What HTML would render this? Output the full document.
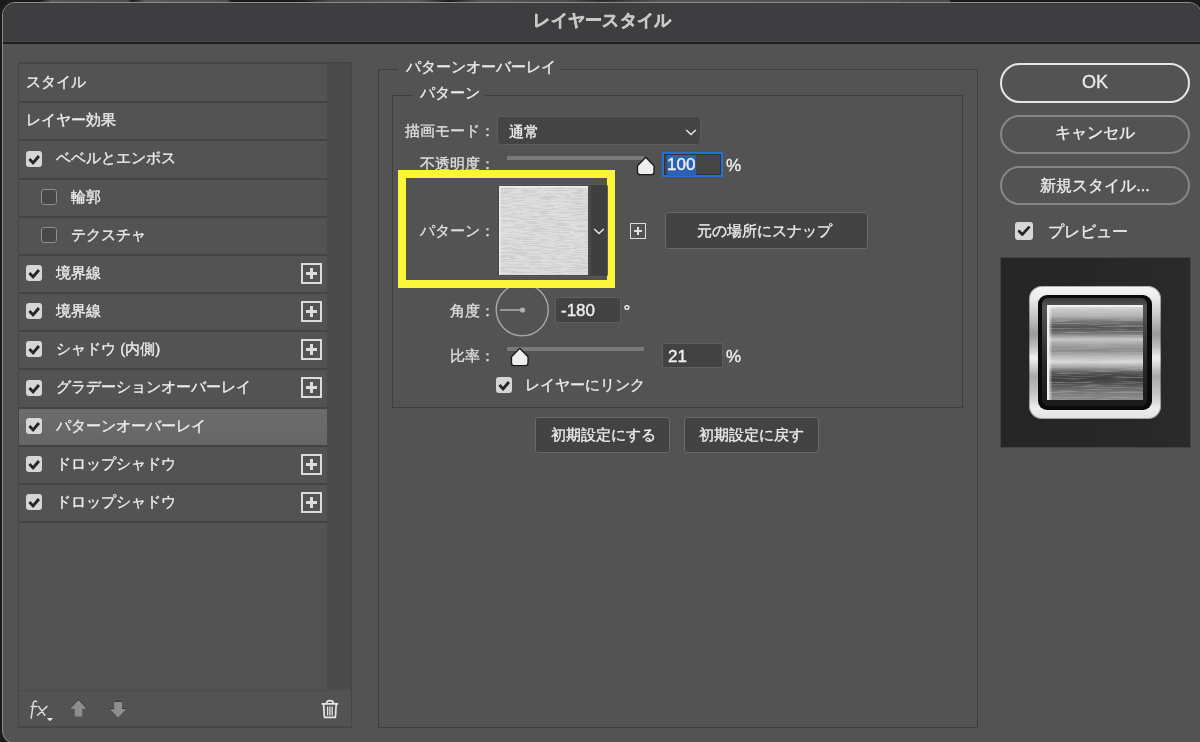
<!DOCTYPE html>
<html><head><meta charset="utf-8">
<style>
*{box-sizing:border-box;margin:0;padding:0}
html,body{width:1200px;height:742px;overflow:hidden;background:#1b1b1b;font-family:"Liberation Sans",sans-serif;}
.abs{position:absolute}
#dlg{position:absolute;left:1.5px;top:2px;width:1200.5px;height:742px;border:1px solid #8c8c8c;border-radius:13px 13px 3px 13px;background:#535353;overflow:hidden}
#title{position:absolute;left:0;top:0;width:100%;height:41px;background:#3e3e40;border-bottom:2px solid #1e1e1e;box-shadow:inset 0 -1px 0 #474749}
#title span{position:absolute;left:0;width:1200px;text-align:center;top:5.7px;font-size:17px;font-weight:bold;color:#c8c8c8;letter-spacing:0.3px;-webkit-text-stroke:0.5px #c8c8c8}
.t{position:absolute;color:#ececec;font-size:15px;white-space:nowrap;line-height:18px;-webkit-text-stroke:0.35px currentColor}
#lp{position:absolute;left:17px;top:62px;width:336px;height:667px;border:1px solid #444;}
.sel{background:linear-gradient(#6c6c6c,#666);} .sep{background:#434343} .lbl{color:#dedede}
.num{font-size:17px;line-height:20px;color:#f0f0f0}
.swatch{background:repeating-linear-gradient(175deg,#dcdcdc 0px,#d2d2d2 1px,#e2e2e2 2px,#d6d6d6 3px)}
.metal{background:linear-gradient(180deg,#f6f6f6 0%,#ececec 9%,#c8c8c8 22%,#9a9a9a 36%,#c0c0c0 46%,#f0f0f0 54%,#a8a8a8 68%,#c8c8c8 82%,#eeeeee 92%,#e2e2e2 100%)}
.ptn{background:linear-gradient(180deg,#dcdcdc 0%,#c4c4c4 8%,#9a9a9a 16%,#505050 23%,#6a6a6a 29%,#cfcfcf 35%,#8e8e8e 43%,#a8a8a8 50%,#e0e0e0 58%,#bdbdbd 65%,#5a5a5a 72%,#363636 80%,#4e4e4e 88%,#8a8a8a 100%)}
.row{position:absolute;left:0;width:310px;height:38px;border-top:2px solid #454545}
.cb{position:absolute;width:16px;height:16px;border-radius:3px;background:#d6d6d6}
.cbo{position:absolute;width:16px;height:16px;border-radius:3px;border:1.5px solid #8e8e8e;background:#474747}
.plus{position:absolute;width:21px;height:21px;border:2px solid #dcdcdc}
.plus:before{content:"";position:absolute;left:3px;top:7px;width:11px;height:3px;background:#dcdcdc}
.plus:after{content:"";position:absolute;left:7px;top:3px;width:3px;height:11px;background:#dcdcdc}
.grp{position:absolute;border:1px solid #3f3f3f}
.btn{position:absolute;background:#434343;border:1px solid #6a6a6a;border-radius:3px;color:#e8e8e8;font-size:14px;text-align:center}
.pill{position:absolute;border:2px solid #868686;border-radius:20px;color:#ececec;font-size:16px;text-align:center}
.inp{position:absolute;background:#444;border:1px solid #5e5e5e;color:#eee;font-size:16px}
</style></head><body style="will-change:transform">
<div class="abs" style="left:40px;top:0;width:220px;height:1.5px;background:linear-gradient(90deg,#1b1b1b,#555 5%,#4a4a4a 40%,#1b1b1b 42%,#5a5a5a 48%,#505050 85%,#1b1b1b 87%)"></div>
<div class="abs" style="left:300px;top:0;width:600px;height:1.5px;background:linear-gradient(90deg,#1b1b1b,#4a4a4a 5%,#595959 20%,#1b1b1b 25%,#555 30%,#4a4a4a 45%,#2a2a2a 50%,#555 60%,#505050 100%)"></div>
<div class="abs" style="left:900px;top:0;width:50px;height:1.5px;background:#4a4a4a"></div>
<div id="dlg">
  <div id="title"><span>レイヤースタイル</span></div>
</div>

<!-- left panel -->
<div class="abs" style="left:18px;top:62px;width:334px;height:666px;background:#535353;border-left:1px solid #464646;border-right:1px solid #464646;border-bottom:2px solid #474747"></div>
<div class="abs" style="left:19px;top:62px;width:308px;height:2px;background:#454545"></div>
<div class="abs" style="left:327px;top:62px;width:24px;height:627px;background:#4a4a4a;border-top:1px solid #454545"></div>
<div class="abs" style="left:19px;top:690px;width:332px;height:1px;background:#4b4b4b"></div>
<div class="t" style="left:25.5px;top:72.5px">スタイル</div>
<div class="t" style="left:25.5px;top:111.0px">レイヤー効果</div>
<div class="cb" style="left:26px;top:150.5px"><svg width="16" height="16" viewBox="0 0 16 16"><path d="M3.4 8.1 L7.1 11.9 L12.9 5" fill="none" stroke="#262626" stroke-width="2.9" stroke-linejoin="miter"/></svg></div>
<div class="t" style="left:56px;top:149.0px">ベベルとエンボス</div>
<div class="cbo" style="left:41px;top:189.0px"></div>
<div class="t" style="left:71px;top:187.5px">輪郭</div>
<div class="cbo" style="left:41px;top:227.0px"></div>
<div class="t" style="left:71px;top:225.5px">テクスチャ</div>
<div class="cb" style="left:26px;top:265.0px"><svg width="16" height="16" viewBox="0 0 16 16"><path d="M3.4 8.1 L7.1 11.9 L12.9 5" fill="none" stroke="#262626" stroke-width="2.9" stroke-linejoin="miter"/></svg></div>
<div class="t" style="left:56px;top:263.5px">境界線</div>
<div class="plus" style="left:301px;top:262.5px"></div>
<div class="cb" style="left:26px;top:303.0px"><svg width="16" height="16" viewBox="0 0 16 16"><path d="M3.4 8.1 L7.1 11.9 L12.9 5" fill="none" stroke="#262626" stroke-width="2.9" stroke-linejoin="miter"/></svg></div>
<div class="t" style="left:56px;top:301.5px">境界線</div>
<div class="plus" style="left:301px;top:300.5px"></div>
<div class="cb" style="left:26px;top:341.0px"><svg width="16" height="16" viewBox="0 0 16 16"><path d="M3.4 8.1 L7.1 11.9 L12.9 5" fill="none" stroke="#262626" stroke-width="2.9" stroke-linejoin="miter"/></svg></div>
<div class="t" style="left:56px;top:339.5px">シャドウ (内側)</div>
<div class="plus" style="left:301px;top:338.5px"></div>
<div class="cb" style="left:26px;top:379.5px"><svg width="16" height="16" viewBox="0 0 16 16"><path d="M3.4 8.1 L7.1 11.9 L12.9 5" fill="none" stroke="#262626" stroke-width="2.9" stroke-linejoin="miter"/></svg></div>
<div class="t" style="left:56px;top:378.0px">グラデーションオーバーレイ</div>
<div class="plus" style="left:301px;top:377.0px"></div>
<div class="abs sel" style="left:19px;top:409px;width:308px;height:36px"></div>
<div class="cb" style="left:26px;top:418.0px"><svg width="16" height="16" viewBox="0 0 16 16"><path d="M3.4 8.1 L7.1 11.9 L12.9 5" fill="none" stroke="#262626" stroke-width="2.9" stroke-linejoin="miter"/></svg></div>
<div class="t" style="left:56px;top:416.5px">パターンオーバーレイ</div>
<div class="cb" style="left:26px;top:456.0px"><svg width="16" height="16" viewBox="0 0 16 16"><path d="M3.4 8.1 L7.1 11.9 L12.9 5" fill="none" stroke="#262626" stroke-width="2.9" stroke-linejoin="miter"/></svg></div>
<div class="t" style="left:56px;top:454.5px">ドロップシャドウ</div>
<div class="plus" style="left:301px;top:453.5px"></div>
<div class="cb" style="left:26px;top:494.0px"><svg width="16" height="16" viewBox="0 0 16 16"><path d="M3.4 8.1 L7.1 11.9 L12.9 5" fill="none" stroke="#262626" stroke-width="2.9" stroke-linejoin="miter"/></svg></div>
<div class="t" style="left:56px;top:492.5px">ドロップシャドウ</div>
<div class="plus" style="left:301px;top:491.5px"></div>
<div class="abs sep" style="left:19px;top:101px;width:308px;height:2px"></div>
<div class="abs sep" style="left:19px;top:139px;width:308px;height:2px"></div>
<div class="abs sep" style="left:19px;top:178px;width:308px;height:2px"></div>
<div class="abs sep" style="left:19px;top:216px;width:308px;height:2px"></div>
<div class="abs sep" style="left:19px;top:254px;width:308px;height:2px"></div>
<div class="abs sep" style="left:19px;top:292px;width:308px;height:2px"></div>
<div class="abs sep" style="left:19px;top:330px;width:308px;height:2px"></div>
<div class="abs sep" style="left:19px;top:368px;width:308px;height:2px"></div>
<div class="abs sep" style="left:19px;top:407px;width:308px;height:2px"></div>
<div class="abs sep" style="left:19px;top:445px;width:308px;height:2px"></div>
<div class="abs sep" style="left:19px;top:483px;width:308px;height:2px"></div>
<div class="abs sep" style="left:19px;top:521px;width:308px;height:2px"></div>
<!-- toolbar -->
<svg class="abs" style="left:28px;top:698px" width="30" height="26" viewBox="0 0 30 26"><path d="M8.6 3.6 Q6.4 2.2 5.4 4.6 L3.2 20.2 M3.2 8.4 L8.8 8.4 M10.6 8.4 L16.8 17.2 M19 8.4 L9.6 17.2" fill="none" stroke="#dcdcdc" stroke-width="1.5" stroke-linecap="round"/><path d="M18.8 20 L25 20 L21.9 23.2Z" fill="#e6e6e6"/></svg>
<svg class="abs" style="left:69px;top:699px" width="19" height="19" viewBox="0 0 19 19"><path d="M9.4 0.6 L18.2 9.8 L13.2 9.8 L13.2 17.4 L5.8 17.4 L5.8 9.8 L0.8 9.8Z" fill="#8e8e8e"/><path d="M0.8 9.8 L9.4 0.6 L18.2 9.8" fill="none" stroke="#333" stroke-width="0.9"/></svg>
<svg class="abs" style="left:109px;top:699.5px" width="19" height="19" viewBox="0 0 19 19"><path d="M5.2 1.6 L13 1.6 L13 8.6 L17.6 8.6 L9.1 17.6 L0.6 8.6 L5.2 8.6Z" fill="#8e8e8e"/><path d="M5.2 1.3 L13 1.3 M0.6 8.6 L5.2 8.6 M13 8.6 L17.6 8.6" stroke="#333" stroke-width="1"/></svg>
<svg class="abs" style="left:320px;top:699px" width="20" height="21" viewBox="0 0 20 21"><path d="M1.6 4.8 L18.2 4.8 M6.4 4.4 Q6.4 1.6 9.9 1.6 Q13.4 1.6 13.4 4.4 M3.6 5.2 L4.4 18.4 L15.4 18.4 L16.2 5.2" fill="none" stroke="#e6e6e6" stroke-width="1.7" stroke-linejoin="round"/><path d="M7.6 7.6 L7.6 16.4 M9.9 7.6 L9.9 16.4 M12.2 7.6 L12.2 16.4" stroke="#e6e6e6" stroke-width="1.3"/></svg>



<!-- middle -->
<div class="grp" style="left:378px;top:69px;width:600px;height:659px"></div>
<div class="abs" style="left:398px;top:60px;width:162px;height:18px;background:#535353"></div>
<div class="t" style="left:406px;top:58px">パターンオーバーレイ</div>
<div class="grp" style="left:392px;top:95px;width:571px;height:313px"></div>
<div class="abs" style="left:413px;top:86px;width:72px;height:18px;background:#535353"></div>
<div class="t" style="left:419.5px;top:84px">パターン</div>

<div class="t lbl" style="left:405px;top:122px">描画モード：</div>
<div class="abs" style="left:497px;top:116px;width:204px;height:29px;background:#444;border:1px solid #5c5c5c;border-radius:4px"></div>
<div class="t" style="left:508.5px;top:122.5px">通常</div>
<svg class="abs" style="left:685px;top:128px" width="12" height="9"><path d="M1.2 2 L6 6.6 L10.8 2" fill="none" stroke="#e8e8e8" stroke-width="1.4"/></svg>

<div class="t lbl" style="left:419.5px;top:155px">不透明度：</div>
<div class="abs" style="left:507px;top:156px;width:137px;height:4px;background:#7a7a7a"></div>
<svg class="abs" style="left:636px;top:156px" width="20" height="20" viewBox="0 0 20 20"><path d="M9.75 1.3 L18 9.8 L18 16 Q18 18.6 15.4 18.6 L4.1 18.6 Q1.5 18.6 1.5 16 L1.5 9.8Z" fill="#eeeeee" stroke="#1a1a1a" stroke-width="1.3" stroke-linejoin="round"/></svg>
<div class="abs" style="left:662px;top:152px;width:61px;height:25px;background:#454545;border:2px solid #2470d6;box-shadow:inset 0 0 0 1px #333"></div>
<div class="abs" style="left:667px;top:154.5px;width:29px;height:21px;background:#2c62b4"></div>
<div class="t num" style="left:667px;top:155px">100</div>
<div class="t num" style="left:726px;top:155.5px">%</div>

<!-- yellow -->
<div class="abs" style="left:398px;top:170px;width:217px;height:118px;border:8px solid #fbf53b"></div>
<div class="t lbl" style="left:419.5px;top:221.5px">パターン：</div>
<div class="abs" style="left:496px;top:184px;width:112px;height:93px;background:#4a4a4a;border:1px solid #5a5a5a;border-radius:3px"></div>
<svg class="abs" style="left:499px;top:186px" width="89" height="89" viewBox="0 0 89 89"><defs><filter id="nz" x="0" y="0" width="100%" height="100%"><feTurbulence type="fractalNoise" baseFrequency="0.07 1.1" numOctaves="3" seed="7"/><feColorMatrix type="matrix" values="0 0 0 0 0.6  0 0 0 0 0.6  0 0 0 0 0.6  6 0 0 0 -2.7"/></filter></defs><rect width="89" height="89" fill="#dedede"/><rect width="89" height="89" filter="url(#nz)" opacity="0.8"/><rect x="0" y="0" width="89" height="1.5" fill="#f0f0f0"/><rect x="0" y="0" width="1.5" height="89" fill="#eeeeee"/></svg>
<div class="abs" style="left:591px;top:185px;width:16px;height:91px;background:#3f3f3f"></div>
<svg class="abs" style="left:593px;top:227px" width="12" height="9"><path d="M1.2 2 L6 6.6 L10.8 2" fill="none" stroke="#e8e8e8" stroke-width="1.4"/></svg>

<div class="abs" style="left:630px;top:223px;width:16px;height:16px;border:1.5px solid #dcdcdc"></div>
<div class="abs" style="left:634px;top:230px;width:8px;height:1.6px;background:#e0e0e0"></div>
<div class="abs" style="left:637.2px;top:227px;width:1.6px;height:8px;background:#e0e0e0"></div>
<div class="btn" style="left:665px;top:212px;width:203px;height:37px"></div>
<div class="t" style="left:697px;top:222px">元の場所にスナップ</div>

<div class="t lbl" style="left:449.5px;top:302px">角度：</div>
<svg class="abs" style="left:494px;top:281.5px" width="56" height="56" viewBox="0 0 56 56"><circle cx="28.2" cy="27.8" r="26" fill="none" stroke="#a8a8a8" stroke-width="1.4"/><path d="M6 28 L28 28" stroke="#a8a8a8" stroke-width="1.6"/><circle cx="28.5" cy="28" r="2.6" fill="#b0b0b0"/></svg>
<!-- yellow bottom redraw over circle -->
<div class="abs" style="left:398px;top:280px;width:217px;height:8px;background:#fbf53b"></div>
<div class="abs" style="left:555px;top:297px;width:66px;height:26px;background:#424242;border:1px solid #5e5e5e"></div>
<div class="t num" style="left:561px;top:301px">-180</div>
<div class="t num" style="left:623.5px;top:301.5px;font-size:17px">°</div>

<div class="t lbl" style="left:449.5px;top:347px">比率：</div>
<div class="abs" style="left:507px;top:347px;width:137px;height:4px;background:#7a7a7a"></div>
<svg class="abs" style="left:509.5px;top:347px" width="20" height="20" viewBox="0 0 20 20"><path d="M9.75 1.3 L18 9.8 L18 16 Q18 18.6 15.4 18.6 L4.1 18.6 Q1.5 18.6 1.5 16 L1.5 9.8Z" fill="#eeeeee" stroke="#1a1a1a" stroke-width="1.3" stroke-linejoin="round"/></svg>
<div class="abs" style="left:662px;top:343px;width:61px;height:25px;background:#424242;border:1px solid #5e5e5e"></div>
<div class="t num" style="left:668px;top:346.5px">21</div>
<div class="t num" style="left:726px;top:347px">%</div>

<div class="cb" style="left:496px;top:377px"><svg width="16" height="16" viewBox="0 0 16 16"><path d="M3.4 8.1 L7.1 11.9 L12.9 5" fill="none" stroke="#262626" stroke-width="2.9" stroke-linejoin="miter"/></svg></div>
<div class="t" style="left:525px;top:376px">レイヤーにリンク</div>

<div class="btn" style="left:535px;top:417px;width:135px;height:36px"></div>
<div class="t" style="left:550.5px;top:426px">初期設定にする</div>
<div class="btn" style="left:684px;top:417px;width:135px;height:36px"></div>
<div class="t" style="left:698.5px;top:426px">初期設定に戻す</div>

<!-- right -->
<div class="pill" style="left:1000px;top:63px;width:190px;height:40px;border:2px solid #e6e6e6"></div>
<div class="t" style="left:1000px;width:190px;text-align:center;top:71px;font-size:18px;line-height:22px">OK</div>
<div class="pill" style="left:1000px;top:115px;width:190px;height:39px"></div>
<div class="t" style="left:1000px;width:190px;text-align:center;top:123px;font-size:16px;line-height:20px">キャンセル</div>
<div class="pill" style="left:1000px;top:166px;width:190px;height:39px"></div>
<div class="t" style="left:1000px;width:190px;text-align:center;top:176px;font-size:16px;line-height:20px">新規スタイル...</div>
<div class="cb" style="left:1015px;top:222px;width:18px;height:18px"><svg width="18" height="18" viewBox="0 0 18 18"><path d="M4.2 9.2 L7.4 12.4 L13.8 5.4" fill="none" stroke="#252525" stroke-width="2.8" stroke-linecap="round" stroke-linejoin="round"/></svg></div>
<div class="t" style="left:1048px;top:222px;font-size:16px;line-height:20px">プレビュー</div>

<div class="abs" style="left:1000px;top:257px;width:191px;height:191px;background:linear-gradient(90deg,#252525,#272727 50%,#2a2a2a);border:1px solid #444"></div>
<div class="abs metal" style="left:1029px;top:286px;width:132px;height:133px;border-radius:13px;box-shadow:inset 0 0 0 1px rgba(0,0,0,0.28)"></div>
<div class="abs" style="left:1038px;top:295px;width:114px;height:115px;border-radius:9px;background:#0b0b0b"></div>
<div class="abs" style="left:1042px;top:298px;width:105px;height:108px;border-radius:6px;background:linear-gradient(180deg,#3a3a3a,#555 8%,#2a2a2a 60%,#1a1a1a);"></div>
<svg class="abs" style="left:1047px;top:305px" width="96" height="95" viewBox="0 0 96 95"><defs><linearGradient id="pg" x1="0" y1="0" x2="0" y2="1"><stop offset="0" stop-color="#e8e8e8"/><stop offset="0.04" stop-color="#d0d0d0"/><stop offset="0.12" stop-color="#b0b0b0"/><stop offset="0.18" stop-color="#707070"/><stop offset="0.24" stop-color="#505050"/><stop offset="0.30" stop-color="#777"/><stop offset="0.36" stop-color="#c8c8c8"/><stop offset="0.42" stop-color="#a0a0a0"/><stop offset="0.48" stop-color="#8a8a8a"/><stop offset="0.54" stop-color="#b8b8b8"/><stop offset="0.60" stop-color="#dcdcdc"/><stop offset="0.66" stop-color="#9a9a9a"/><stop offset="0.72" stop-color="#505050"/><stop offset="0.78" stop-color="#3e3e3e"/><stop offset="0.84" stop-color="#555"/><stop offset="0.92" stop-color="#7a7a7a"/><stop offset="1" stop-color="#8a8a8a"/></linearGradient><filter id="nz2" x="0" y="0" width="100%" height="100%"><feTurbulence type="fractalNoise" baseFrequency="0.03 0.8" numOctaves="2" seed="11"/><feColorMatrix type="matrix" values="0 0 0 0 0.5  0 0 0 0 0.5  0 0 0 0 0.5  4 0 0 0 -1.9"/></filter></defs><rect width="96" height="95" fill="url(#pg)"/><rect width="96" height="95" filter="url(#nz2)" opacity="0.38"/><rect x="0" y="0" width="96" height="2" fill="#f0f0f0"/><rect x="0" y="0" width="2.5" height="95" fill="#f2f2f2"/><rect x="2.5" y="0" width="2" height="95" fill="#ffffff" opacity="0.35"/></svg>

</body></html>
